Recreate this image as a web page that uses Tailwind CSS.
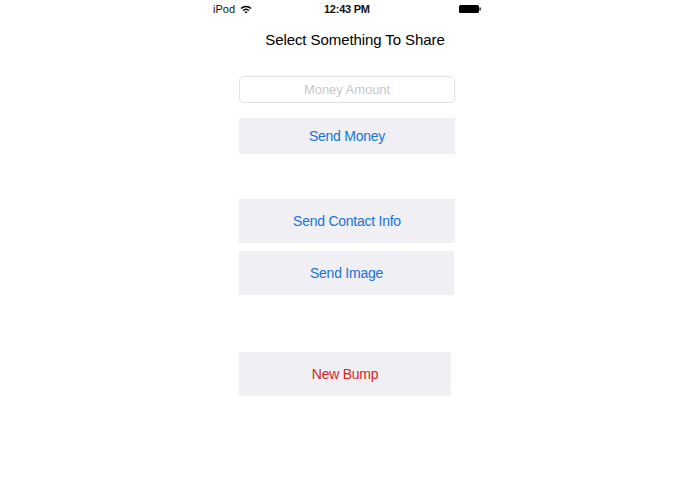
<html lang="en">
<head>
  <meta charset="utf-8" />
  <title>Select Something To Share</title>
  <script src="https://cdn.jsdelivr.net/npm/@tailwindcss/browser@4"></script>
</head>
<body class="bg-white font-['Liberation_Sans',sans-serif] h-[494px] overflow-hidden">
  <div class="w-[320px] ml-[187px] flex flex-col">
    <!-- Status bar -->
    <div class="h-[18px] flex items-center pl-[26px] pr-[26px] text-[11px] text-[#111]">
      <div class="flex items-center w-[111px]">
        <span>iPod</span>
        <svg class="ml-[5px]" width="12" height="9" viewBox="0 0 12 9">
          <path d="M0.5 3 A8 8 0 0 1 11.5 3 L10.4 4.1 A6.4 6.4 0 0 0 1.6 4.1 Z" fill="#000" />
          <path d="M2.5 5 A5.2 5.2 0 0 1 9.5 5 L8.4 6.1 A3.6 3.6 0 0 0 3.6 6.1 Z" fill="#000" />
          <path d="M4.5 7 A2.2 2.2 0 0 1 7.5 7 L6 8.6 Z" fill="#000" />
        </svg>
      </div>
      <span class="font-bold tracking-[-0.25px]">12:43 PM</span>
      <svg class="ml-auto" width="22" height="8" viewBox="0 0 22 8">
        <rect x="0" y="0" width="20" height="8" rx="1.5" fill="#000" />
        <rect x="20.5" y="2.5" width="1.2" height="3" fill="#000" />
      </svg>
    </div>

    <h1 class="mt-[13px] h-[18px] leading-[18px] text-[15px] tracking-[-0.08px] text-black text-center pl-[16px]">Select Something To Share</h1>

    <div class="mt-[27px] ml-[52px] flex flex-col items-start">
      <input
        class="w-[216px] h-[27px] border border-[#e3e3e6] rounded-[5px] text-center text-[13px] tracking-[-0.05px] placeholder:text-[#c7c7cd] outline-none"
        placeholder="Money Amount"
      />
      <button class="mt-[15px] w-[216px] h-[36px] bg-[#efeff4] text-[#1a74d4] text-sm tracking-[-0.25px]">Send Money</button>
      <button class="mt-[45px] w-[216px] h-[44px] bg-[#efeff4] text-[#1a74d4] text-sm tracking-[-0.25px]">Send Contact Info</button>
      <button class="mt-[8px] w-[215px] h-[44px] bg-[#efeff4] text-[#1a74d4] text-sm tracking-[-0.25px]">Send Image</button>
      <button class="mt-[57px] w-[212px] h-[44px] bg-[#efeff4] text-[#d9261c] text-sm tracking-[-0.25px]">New Bump</button>
    </div>
  </div>
</body>
</html>
